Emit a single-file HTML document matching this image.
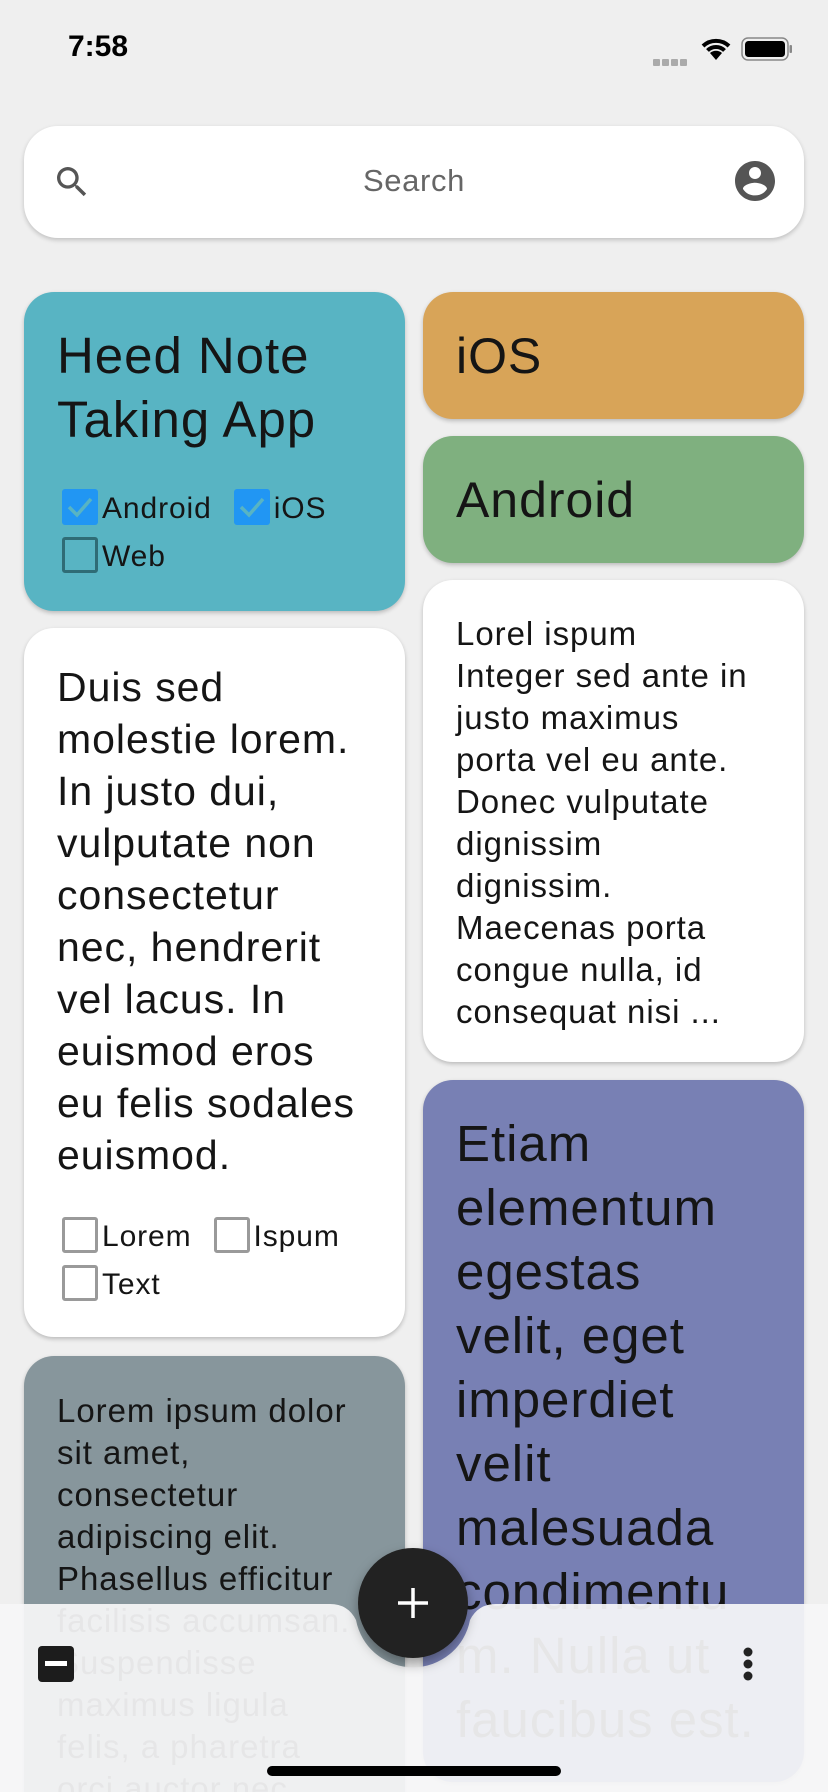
<!DOCTYPE html>
<html style="height:1792px;overflow:hidden"><head><meta charset="utf-8">
<style>
*{margin:0;padding:0;box-sizing:border-box}
body{width:828px;height:1792px;background:#efefef;font-family:"Liberation Sans",sans-serif;color:#151515;position:relative;overflow:hidden}
.abs{position:absolute}
.card{position:absolute;border-radius:30px;box-shadow:0 2px 4px rgba(0,0,0,.22);overflow:hidden;white-space:nowrap;letter-spacing:0.06em}
.t{position:absolute;left:33px}
.cb{display:inline-block;width:36px;height:36px;border-radius:3px;vertical-align:middle;margin-right:4px;position:relative;top:-3px}
.row{position:absolute;left:38px;font-size:30px;height:48px;line-height:48px;letter-spacing:0.03em}
</style></head><body>
<div class="abs" style="left:68px;top:30px;font-size:30px;font-weight:bold;color:#000">7:58</div>
<div class="abs" style="left:653px;top:53px;">
 <span style="display:inline-block;width:7px;height:7px;background:#aaa;border-radius:1px;margin-right:2px"></span><span style="display:inline-block;width:7px;height:7px;background:#aaa;border-radius:1px;margin-right:2px"></span><span style="display:inline-block;width:7px;height:7px;background:#aaa;border-radius:1px;margin-right:2px"></span><span style="display:inline-block;width:7px;height:7px;background:#aaa;border-radius:1px"></span>
</div>
<svg class="abs" style="left:700px;top:36px" width="32" height="26" viewBox="0 0 32 26"><path d="M16 24 L10 17 A9 9 0 0 1 22 17 Z" fill="#000"/><path d="M3 10 A19 19 0 0 1 29 10" stroke="#000" stroke-width="4" fill="none"/><path d="M7.5 14.5 A12 12 0 0 1 24.5 14.5" stroke="#000" stroke-width="4" fill="none"/></svg>
<svg class="abs" style="left:741px;top:37px" width="52" height="26" viewBox="0 0 52 26"><rect x="1" y="1" width="46" height="22" rx="6" fill="none" stroke="#888" stroke-width="1.5"/><rect x="4" y="4" width="40" height="16" rx="3.5" fill="#000"/><rect x="48.5" y="8" width="2.5" height="8" rx="1" fill="#888"/></svg>
<div class="abs" style="left:24px;top:126px;width:780px;height:112px;background:#fff;border-radius:34px;box-shadow:0 2px 5px rgba(0,0,0,.2)"></div>
<svg class="abs" style="left:52px;top:162px" width="40" height="40" viewBox="0 0 24 24"><path d="M15.5 14h-.79l-.28-.27A6.47 6.47 0 0 0 16 9.5 6.5 6.5 0 1 0 9.5 16c1.61 0 3.09-.59 4.23-1.57l.27.28v.79l5 4.99L20.49 19l-4.99-5zm-6 0C7.01 14 5 11.99 5 9.5S7.01 5 9.5 5 14 7.01 14 9.5 11.99 14 9.5 14z" fill="#555"/></svg>
<div class="abs" style="left:0;width:828px;text-align:center;top:163px;font-size:31px;color:#666;letter-spacing:0.02em">Search</div>
<svg class="abs" style="left:731px;top:157px" width="48" height="48" viewBox="0 0 24 24"><path d="M12 2C6.48 2 2 6.48 2 12s4.48 10 10 10 10-4.48 10-10S17.52 2 12 2zm0 3c1.66 0 3 1.34 3 3s-1.34 3-3 3-3-1.34-3-3 1.34-3 3-3zm0 14.2a7.2 7.2 0 0 1-6-3.22c.03-1.99 4-3.08 6-3.08 1.99 0 5.97 1.09 6 3.08a7.2 7.2 0 0 1-6 3.22z" fill="#555"/></svg>

<div class="card" style="left:24px;top:292px;width:381px;height:319px;background:#58b4c3">
 <div class="t" style="top:32px;font-size:51px;line-height:64px">Heed Note<br>Taking App</div>
 <div class="row" style="top:193px"><span class="cb" style="background:#2196f3"><svg width="36" height="36" viewBox="0 0 36 36"><path d="M7 18 L15 26 L29 10" stroke="#58b4c3" stroke-width="3.5" fill="none"/></svg></span>Android<span style="display:inline-block;width:22px"></span><span class="cb" style="background:#2196f3"><svg width="36" height="36" viewBox="0 0 36 36"><path d="M7 18 L15 26 L29 10" stroke="#58b4c3" stroke-width="3.5" fill="none"/></svg></span>iOS</div>
 <div class="row" style="top:241px"><span class="cb" style="border:3.5px solid #2f6c76"></span>Web</div>
</div>
<div class="card" style="left:24px;top:628px;width:381px;height:709px;background:#fff">
 <div class="t" style="top:33px;font-size:41px;line-height:52px">Duis sed<br>molestie lorem.<br>In justo dui,<br>vulputate non<br>consectetur<br>nec, hendrerit<br>vel lacus. In<br>euismod eros<br>eu felis sodales<br>euismod.</div>
 <div class="row" style="top:585px"><span class="cb" style="border:3.5px solid #9a9a9a"></span>Lorem<span style="display:inline-block;width:22px"></span><span class="cb" style="border:3.5px solid #9a9a9a"></span>Ispum</div>
 <div class="row" style="top:633px"><span class="cb" style="border:3.5px solid #9a9a9a"></span>Text</div>
</div>
<div class="card" style="left:24px;top:1356px;width:381px;height:470px;background:#87969c">
 <div class="t" style="top:34px;font-size:33px;line-height:42px">Lorem ipsum dolor<br>sit amet,<br>consectetur<br>adipiscing elit.<br>Phasellus efficitur<br>facilisis accumsan.<br>Suspendisse<br>maximus ligula<br>felis, a pharetra<br>orci auctor nec</div>
</div>

<div class="card" style="left:423px;top:292px;width:381px;height:127px;background:#d8a458">
 <div class="t" style="top:32px;font-size:50px;line-height:64px">iOS</div>
</div>
<div class="card" style="left:423px;top:436px;width:381px;height:127px;background:#7fb07f">
 <div class="t" style="top:32px;font-size:50px;line-height:64px">Android</div>
</div>
<div class="card" style="left:423px;top:580px;width:381px;height:482px;background:#fff">
 <div class="t" style="top:33px;font-size:33px;line-height:42px">Lorel ispum<br>Integer sed ante in<br>justo maximus<br>porta vel eu ante.<br>Donec vulputate<br>dignissim<br>dignissim.<br>Maecenas porta<br>congue nulla, id<br>consequat nisi ...</div>
</div>
<div class="card" style="left:423px;top:1080px;width:381px;height:702px;background:#7880b4">
 <div class="t" style="top:32px;font-size:51px;line-height:64px">Etiam<br>elementum<br>egestas<br>velit, eget<br>imperdiet<br>velit<br>malesuada<br>condimentu<br>m. Nulla ut<br>faucibus est.</div>
</div>

<svg class="abs" style="left:0;top:0" width="828" height="1792">
 <defs><filter id="sh" x="-50%" y="-50%" width="200%" height="200%"><feDropShadow dx="0" dy="6" stdDeviation="6" flood-opacity=".35"/></filter></defs>
 <path d="M0 1604 H330 Q348 1604 356 1620 A58 58 0 0 0 470 1620 Q478 1604 496 1604 H828 V1792 H0 Z" fill="rgba(246,246,247,0.93)"/>
 <circle cx="413" cy="1603" r="55" fill="#222" filter="url(#sh)"/>
 <path d="M413 1588 V1618 M398 1603 H428" stroke="#fff" stroke-width="3.5"/>
 <rect x="38" y="1646" width="36" height="36" rx="4" fill="#1c1c1c"/>
 <rect x="45" y="1661" width="22" height="5" fill="#fff"/>
 <circle cx="748" cy="1652" r="4.5" fill="#222"/><circle cx="748" cy="1664" r="4.5" fill="#222"/><circle cx="748" cy="1676" r="4.5" fill="#222"/>
 <rect x="267" y="1766" width="294" height="10" rx="5" fill="#000"/>
</svg>
</body></html>
